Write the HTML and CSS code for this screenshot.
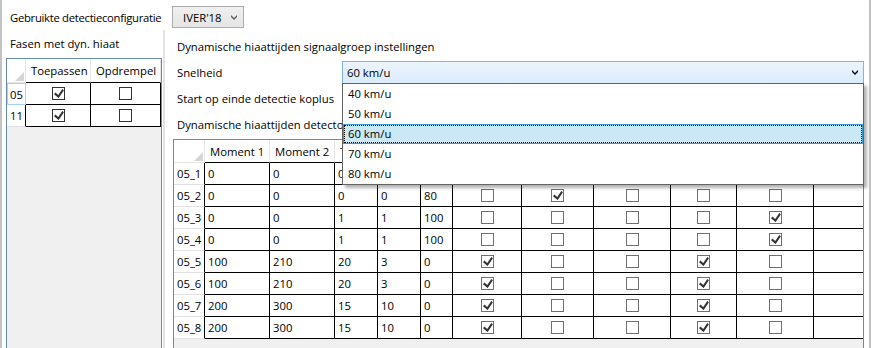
FILE: index.html
```html
<!DOCTYPE html>
<html lang="nl">
<head>
  <meta charset="UTF-8">
  <title>Dynamische hiaattijden</title>
  <link rel="stylesheet" href="styles.css">
</head>
<body>
  <!-- shared glyphs -->
  <svg class="defs" width="0" height="0">
    <symbol id="tick" viewBox="0 0 10 9.1"><path d="M9.975 1.223L4.698 9.098H4.522L0 5.193L1.277 3.522L4.255 6.088L8.333 0Z"/></symbol>
    <symbol id="chev" viewBox="0 -1.8 5.34 4.47"><path d="M0 0L2.667 2.667L5.333 0V-1.782L2.667 0.885L0 -1.782Z"/></symbol>
    <symbol id="corner" viewBox="0 0 9 9"><path d="M9 0V9H0Z"/></symbol>
  </svg>

  <div class="window">
    <div class="topbar">
      <span class="top-label">Gebruikte detectieconfiguratie</span>
      <div class="combo combo-closed">
        <span>IVER'18</span>
        <svg class="chev"><use href="#chev"/></svg>
      </div>
    </div>

    <div class="main">
      <!-- Fasen -->
      <div class="left-panel">
        <div class="panel-title">Fasen met dyn. hiaat</div>
        <div class="grid grid-fasen">
          <div class="grid-row head">
            <div class="corner"><svg><use href="#corner"/></svg></div>
            <div>Toepassen</div>
            <div>Opdrempel</div>
          </div>
          <div class="grid-row">
            <div class="row-head focus">05</div>
            <div class="cell check"><span class="cb dark"><svg><use href="#tick"/></svg></span></div>
            <div class="cell check"><span class="cb dark"></span></div>
          </div>
          <div class="grid-row">
            <div class="row-head">11</div>
            <div class="cell check"><span class="cb dark"><svg><use href="#tick"/></svg></span></div>
            <div class="cell check"><span class="cb dark"></span></div>
          </div>
        </div>
      </div>

      <div class="splitter"></div>

      <!-- Signaalgroep instellingen -->
      <div class="right-panel">
        <div class="field">Dynamische hiaattijden signaalgroep instellingen</div>
        <div class="field">
          <span class="field-label">Snelheid</span>
          <div class="combo combo-open">
            <span>60 km/u</span>
            <svg class="chev"><use href="#chev"/></svg>
            <ul class="dropdown">
              <li>40 km/u</li>
              <li>50 km/u</li>
              <li class="selected">60 km/u</li>
              <li>70 km/u</li>
              <li>80 km/u</li>
            </ul>
          </div>
        </div>
        <div class="field">Start op einde detectie koplus</div>
        <div class="field">Dynamische hiaattijden detecto</div>

        <!-- columns under the open list are left blank -->
        <div class="grid grid-detectoren">
          <div class="grid-row head">
            <div class="corner"><svg><use href="#corner"/></svg></div>
            <div>Moment 1</div>
            <div>Moment 2</div>
            <div>T</div>
            <div></div>
            <div></div>
            <div></div>
            <div></div>
            <div></div>
            <div></div>
            <div></div>
            <div class="filler"></div>
          </div>

          <div class="grid-row">
            <div class="row-head">05_1</div>
            <div class="cell">0</div><div class="cell">0</div><div class="cell">0</div><div class="cell"></div><div class="cell"></div>
            <div class="cell check"><span class="cb"></span></div>
            <div class="cell check"><span class="cb"><svg><use href="#tick"/></svg></span></div>
            <div class="cell check"><span class="cb"></span></div>
            <div class="cell check"><span class="cb"></span></div>
            <div class="cell check"><span class="cb"></span></div>
            <div class="cell filler"></div>
          </div>
          <div class="grid-row">
            <div class="row-head">05_2</div>
            <div class="cell">0</div><div class="cell">0</div><div class="cell">0</div><div class="cell">0</div><div class="cell">80</div>
            <div class="cell check"><span class="cb"></span></div>
            <div class="cell check"><span class="cb"><svg><use href="#tick"/></svg></span></div>
            <div class="cell check"><span class="cb"></span></div>
            <div class="cell check"><span class="cb"></span></div>
            <div class="cell check"><span class="cb"></span></div>
            <div class="cell filler"></div>
          </div>
          <div class="grid-row">
            <div class="row-head">05_3</div>
            <div class="cell">0</div><div class="cell">0</div><div class="cell">1</div><div class="cell">1</div><div class="cell">100</div>
            <div class="cell check"><span class="cb"></span></div>
            <div class="cell check"><span class="cb"></span></div>
            <div class="cell check"><span class="cb"></span></div>
            <div class="cell check"><span class="cb"></span></div>
            <div class="cell check"><span class="cb"><svg><use href="#tick"/></svg></span></div>
            <div class="cell filler"></div>
          </div>
          <div class="grid-row">
            <div class="row-head">05_4</div>
            <div class="cell">0</div><div class="cell">0</div><div class="cell">1</div><div class="cell">1</div><div class="cell">100</div>
            <div class="cell check"><span class="cb"></span></div>
            <div class="cell check"><span class="cb"></span></div>
            <div class="cell check"><span class="cb"></span></div>
            <div class="cell check"><span class="cb"></span></div>
            <div class="cell check"><span class="cb"><svg><use href="#tick"/></svg></span></div>
            <div class="cell filler"></div>
          </div>
          <div class="grid-row">
            <div class="row-head">05_5</div>
            <div class="cell">100</div><div class="cell">210</div><div class="cell">20</div><div class="cell">3</div><div class="cell">0</div>
            <div class="cell check"><span class="cb"><svg><use href="#tick"/></svg></span></div>
            <div class="cell check"><span class="cb"></span></div>
            <div class="cell check"><span class="cb"></span></div>
            <div class="cell check"><span class="cb"><svg><use href="#tick"/></svg></span></div>
            <div class="cell check"><span class="cb"></span></div>
            <div class="cell filler"></div>
          </div>
          <div class="grid-row">
            <div class="row-head">05_6</div>
            <div class="cell">100</div><div class="cell">210</div><div class="cell">20</div><div class="cell">3</div><div class="cell">0</div>
            <div class="cell check"><span class="cb"><svg><use href="#tick"/></svg></span></div>
            <div class="cell check"><span class="cb"></span></div>
            <div class="cell check"><span class="cb"></span></div>
            <div class="cell check"><span class="cb"><svg><use href="#tick"/></svg></span></div>
            <div class="cell check"><span class="cb"></span></div>
            <div class="cell filler"></div>
          </div>
          <div class="grid-row">
            <div class="row-head">05_7</div>
            <div class="cell">200</div><div class="cell">300</div><div class="cell">15</div><div class="cell">10</div><div class="cell">0</div>
            <div class="cell check"><span class="cb"><svg><use href="#tick"/></svg></span></div>
            <div class="cell check"><span class="cb"></span></div>
            <div class="cell check"><span class="cb"></span></div>
            <div class="cell check"><span class="cb"><svg><use href="#tick"/></svg></span></div>
            <div class="cell check"><span class="cb"></span></div>
            <div class="cell filler"></div>
          </div>
          <div class="grid-row">
            <div class="row-head">05_8</div>
            <div class="cell">200</div><div class="cell">300</div><div class="cell">15</div><div class="cell">10</div><div class="cell">0</div>
            <div class="cell check"><span class="cb"><svg><use href="#tick"/></svg></span></div>
            <div class="cell check"><span class="cb"></span></div>
            <div class="cell check"><span class="cb"></span></div>
            <div class="cell check"><span class="cb"><svg><use href="#tick"/></svg></span></div>
            <div class="cell check"><span class="cb"></span></div>
            <div class="cell filler"></div>
          </div>
        </div>
      </div>
    </div>
  </div>
</body>
</html>
```

FILE: styles.css
```css
/* General */
body {
  margin: 0;
  width: 871px;
  height: 348px;
  overflow: hidden;
  background: #fff;
  font-family: "Open Sans", "Noto Sans", sans-serif;
  font-size: 11.3px;
  color: #000;
}

.defs {
  position: absolute;
}

.window {
  height: 348px;
  box-sizing: border-box;
  border-left: 2px solid #c3c3c3;
  border-right: 2px solid #c3c3c3;
  display: flex;
  flex-direction: column;
}

/* Top bar */
.topbar {
  height: 30px;
  box-sizing: border-box;
  padding: 6px 0 2px 8px;
  display: flex;
  align-items: center;
}

.top-label {
  width: 162px;
  white-space: nowrap;
  letter-spacing: -0.3px;
}

/* Combo boxes */
.combo {
  position: relative;
  box-sizing: border-box;
  display: flex;
  align-items: center;
  border: 1px solid #acacac;
  white-space: nowrap;
}

.chev {
  width: 6px;
  height: 5px;
  margin-left: auto;
}

.combo-closed {
  width: 72px;
  height: 22px;
  padding-left: 10px;
  background: linear-gradient(#f0f0f0, #e5e5e5);
}

.combo-closed .chev {
  margin-right: 6px;
  fill: #606060;
}

.combo-open {
  width: 522px;
  height: 23px;
  padding-left: 4px;
  border-color: #7eb4ea;
  background: linear-gradient(#ecf4fc, #dcecfc);
}

.combo-open .chev {
  margin-right: 5px;
  fill: #000;
}

.dropdown {
  position: absolute;
  left: -1px;
  top: 21px;
  width: 522px;
  box-sizing: border-box;
  margin: 0;
  padding: 0;
  list-style: none;
  background: #fff;
  border: 1px solid #646464;
  box-shadow: 3px 3px 3px rgba(0, 0, 0, 0.3);
  z-index: 5;
}

.dropdown li {
  height: 20px;
  line-height: 20px;
  padding-left: 5px;
  box-sizing: border-box;
}

.dropdown li.selected {
  background: #cbe8f6;
  border: 1px solid #26a0da;
  outline: 1px dotted #000;
  outline-offset: -2px;
  line-height: 18px;
  padding-left: 4px;
}

/* Main area */
.main {
  flex: 1;
  display: flex;
  min-height: 0;
}

.left-panel {
  width: 161px;
  box-sizing: border-box;
  padding-left: 4px;
  display: flex;
  flex-direction: column;
}

.panel-title {
  height: 28px;
  line-height: 28px;
  padding-left: 4px;
  white-space: nowrap;
}

.splitter {
  width: 2px;
  background: #e3e3e3;
}

.right-panel {
  flex: 1;
  min-width: 0;
  padding-top: 3px;
  display: flex;
  flex-direction: column;
}

.field {
  height: 26px;
  padding-left: 12px;
  display: flex;
  align-items: center;
  white-space: nowrap;
}

.field-label {
  width: 165px;
}

/* Data grids */
.grid {
  flex: 1;
  box-sizing: border-box;
  background: #f0f0f0;
  border: 1px solid #688caf;
  border-bottom: none;
  overflow: hidden;
}

.grid-fasen {
  width: 156px;
}

.grid-detectoren {
  width: 691px;
  margin: 2px 0 0 8px;
}

.grid-row {
  display: grid;
}

.grid-fasen .grid-row {
  grid-template-columns: 19px 65px 70px;
}

.grid-detectoren .grid-row {
  grid-template-columns: 31px 65px 65px 43px 43px 32px 69px 72px 77px 66px 77px 1fr;
}

.head > div {
  height: 23px;
  box-sizing: border-box;
  padding-left: 5px;
  display: flex;
  align-items: center;
  background: #fff;
  border-right: 1px solid #e5e5e5;
  border-bottom: 1px solid #000;
  white-space: nowrap;
  overflow: hidden;
}

.grid-fasen .head > div {
  height: 24px;
}

.head > .corner {
  padding: 0 1px 1px 0;
  justify-content: flex-end;
  align-items: flex-end;
  border-bottom-color: #e5e5e5;
}

.corner svg {
  width: 9px;
  height: 9px;
  fill: #d5d5d5;
}

.head > .filler {
  border-right: none;
}

.row-head,
.cell {
  height: 22px;
  box-sizing: border-box;
  padding-left: 3px;
  display: flex;
  align-items: center;
  white-space: nowrap;
  overflow: hidden;
}

.row-head {
  background: #fff;
  border-right: 1px solid #000;
  border-bottom: 1px solid #e2e2e2;
}

.row-head.focus {
  border: 1px solid #a6d3f3;
  padding-left: 2px;
}

.cell {
  background: #fff;
  border-right: 1px solid #000;
  border-bottom: 1px solid #000;
}

.cell.check {
  padding-left: 0;
  justify-content: center;
}

.cell.filler {
  border-right: none;
}

/* Checkboxes */
.cb {
  display: block;
  width: 13px;
  height: 13px;
  box-sizing: border-box;
  border: 1px solid #707070;
  background: #fff;
}

.cb.dark {
  border-color: #333;
}

.cb svg {
  display: block;
  width: 10px;
  height: 9px;
  margin: 1px 0 0 1px;
  fill: #333;
}
```
